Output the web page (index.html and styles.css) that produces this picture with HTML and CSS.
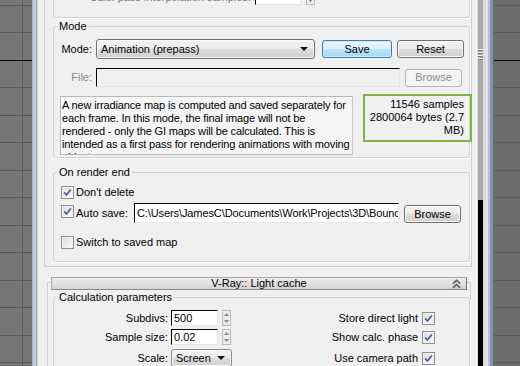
FILE: index.html
```html
<!DOCTYPE html>
<html>
  <head>
    <link rel="stylesheet" href="styles.css">
  </head>
  <body>
    <div class="screen">
      <div class="viewport viewport-left"></div>
      <div class="edge edge-left"></div>

      <div class="panel">
        <!-- Irradiance map rollout (scrolled) -->
        <div class="rollout">
          <div class="group group-cut">
            <div class="row cut-row">
              <span class="label cut-label">Calc. pass interpolation samples:</span>
              <span class="edit cut-edit">15</span>
              <svg class="spinner" width="9" height="16" viewBox="0 0 9 16">
                <rect x=".5" y=".5" width="8" height="15" fill="#ececec" stroke="#bcbcbc"/>
                <path d="M4.5 3L7 6H2z M4.5 13L7 10H2z" fill="#7f7f7f"/>
              </svg>
            </div>
          </div>

          <fieldset class="group mode-group">
            <legend>Mode</legend>
            <div class="row mode-row">
              <span class="label side-label">Mode:</span>
              <div class="combo combo-mode">
                <span>Animation (prepass)</span>
                <i class="arrow"></i>
              </div>
              <button class="btn btn-default save-btn">Save</button>
              <button class="btn reset-btn">Reset</button>
            </div>
            <div class="row file-row">
              <span class="label side-label dim">File:</span>
              <div class="edit file-edit"></div>
              <button class="btn btn-disabled browse-btn">Browse</button>
            </div>
            <div class="row info-row">
              <div class="desc">
                A new irradiance map is computed and saved separately for<br>
                each frame. In this mode, the final image will not be<br>
                rendered - only the GI maps will be calculated. This is<br>
                intended as a first pass for rendering animations with moving<br>
                objects.
              </div>
              <div class="stats">
                11546 samples<br>
                2800064 bytes (2.7<br>
                MB)
              </div>
            </div>
          </fieldset>

          <fieldset class="group end-group">
            <legend>On render end</legend>
            <div class="row check-row delete-row">
              <span class="check checked">
                <svg width="11" height="11" viewBox="0 0 11 11"><path d="M2.2 5.4l2.3 2.6 4.3-5.6" fill="none" stroke="#4b5f9c" stroke-width="1.7"/></svg>
              </span>
              <span class="check-label">Don't delete</span>
            </div>
            <div class="row check-row save-row">
              <span class="check checked">
                <svg width="11" height="11" viewBox="0 0 11 11"><path d="M2.2 5.4l2.3 2.6 4.3-5.6" fill="none" stroke="#4b5f9c" stroke-width="1.7"/></svg>
              </span>
              <span class="check-label autosave-label">Auto save:</span>
              <div class="edit path-edit"><span class="path-text">C:\Users\JamesC\Documents\Work\Projects\3D\Bounc</span></div>
              <button class="btn browse-btn">Browse</button>
            </div>
            <div class="row check-row switch-row">
              <span class="check"></span>
              <span class="check-label">Switch to saved map</span>
            </div>
          </fieldset>
        </div>

        <!-- Light cache rollout -->
        <div class="rollout2">
          <div class="rollout-head">
            <span></span>
            <span class="head-title">V-Ray:: Light cache</span>
            <svg class="chevron" width="9" height="10" viewBox="0 0 9 10">
              <path d="M1 4.6L4.5 1.2 8 4.6M1 8.9L4.5 5.5 8 8.9" fill="none" stroke="#5a5a5a" stroke-width="1.5"/>
            </svg>
          </div>
          <div class="rollout-body">
            <fieldset class="group calc-group">
              <legend>Calculation parameters</legend>
              <div class="row calc-row first-calc">
                <span class="label calc-label">Subdivs:</span>
                <span class="edit num-edit">500</span>
                <svg class="spinner" width="9" height="16" viewBox="0 0 9 16">
                  <rect x=".5" y=".5" width="8" height="15" fill="#ececec" stroke="#bcbcbc"/>
                  <path d="M4.5 3L7 6H2z M4.5 13L7 10H2z" fill="#8a8a8a"/>
                </svg>
                <span class="right-check">
                  <span class="check-label">Store direct light</span>
                  <span class="check checked">
                    <svg width="11" height="11" viewBox="0 0 11 11"><path d="M2.2 5.4l2.3 2.6 4.3-5.6" fill="none" stroke="#4b5f9c" stroke-width="1.7"/></svg>
                  </span>
                </span>
              </div>
              <div class="row calc-row">
                <span class="label calc-label">Sample size:</span>
                <span class="edit num-edit">0.02</span>
                <svg class="spinner" width="9" height="16" viewBox="0 0 9 16">
                  <rect x=".5" y=".5" width="8" height="15" fill="#ececec" stroke="#bcbcbc"/>
                  <path d="M4.5 3L7 6H2z M4.5 13L7 10H2z" fill="#8a8a8a"/>
                </svg>
                <span class="right-check">
                  <span class="check-label">Show calc. phase</span>
                  <span class="check checked">
                    <svg width="11" height="11" viewBox="0 0 11 11"><path d="M2.2 5.4l2.3 2.6 4.3-5.6" fill="none" stroke="#4b5f9c" stroke-width="1.7"/></svg>
                  </span>
                </span>
              </div>
              <div class="row calc-row scale-row">
                <span class="label calc-label">Scale:</span>
                <div class="combo combo-scale">
                  <span>Screen</span>
                  <i class="arrow"></i>
                </div>
                <span class="right-check">
                  <span class="check-label">Use camera path</span>
                  <span class="check checked">
                    <svg width="11" height="11" viewBox="0 0 11 11"><path d="M2.2 5.4l2.3 2.6 4.3-5.6" fill="none" stroke="#4b5f9c" stroke-width="1.7"/></svg>
                  </span>
                </span>
              </div>
            </fieldset>
          </div>
        </div>
      </div>

      <div class="scroll">
        <div class="scroll-track">
          <div class="grip"></div>
        </div>
        <div class="scroll-thumb"></div>
      </div>
      <div class="edge edge-right"></div>
      <div class="viewport viewport-right"></div>
    </div>
  </body>
</html>
```

FILE: styles.css
```css
* {
  box-sizing: border-box;
}

body {
  margin: 0;
  font-family: "Liberation Sans", Arial, sans-serif;
  font-size: 11px;
  line-height: 13px;
  color: #000;
  background: #f0f0f0;
}

.screen {
  display: flex;
  width: 520px;
  height: 366px;
  overflow: hidden;
}

/* Viewports on both sides */
.viewport {
  height: 366px;
  flex-shrink: 0;
  background-color: #767676;
  background-image:
    linear-gradient(#0d0d0d, #0d0d0d),
    repeating-linear-gradient(180deg, #5a5a5a 0 1px, transparent 1px 27.5px);
  background-size: 100% 1px, 100% 100%;
  background-position: 0 60px, 0 5px;
  background-repeat: no-repeat, repeat;
}

.viewport-left {
  width: 32px;
  background-image:
    linear-gradient(#0d0d0d, #0d0d0d),
    linear-gradient(#5a5a5a, #5a5a5a),
    repeating-linear-gradient(180deg, #5a5a5a 0 1px, transparent 1px 27.5px);
  background-size: 100% 1px, 1px 100%, 100% 100%;
  background-position: 0 60px, 22px 0, 0 5px;
  background-repeat: no-repeat, no-repeat, repeat;
}

.viewport-right {
  width: 26px;
  background-color: #6d6d6d;
}

.edge {
  flex-shrink: 0;
  height: 366px;
}

.edge-left {
  width: 6px;
  background: linear-gradient(90deg, #a9b2c1 0 1px, #c7ced9 1px 4px, #9fa8b6 4px 5px, #d9d9d9 5px 6px);
}

.edge-right {
  width: 8px;
  background: linear-gradient(90deg, #e4e4e4 0 2px, #b7c0ce 2px 4px, #8593a8 4px 7px, #5c6470 7px 8px);
}

/* Command panel */
.panel {
  width: 438px;
  height: 366px;
  flex-shrink: 0;
  overflow: hidden;
  background: #f0f0f0;
  border-left: 1px solid #e6e6e6;
}

.rollout {
  margin-left: 5px;
  width: 428px;
  border-left: 1px solid #cfcfcf;
  border-right: 1px solid #cfcfcf;
  border-bottom: 1px solid #cfcfcf;
  padding-bottom: 4px;
}

.row {
  display: flex;
  align-items: center;
}

.group {
  margin: 0 0 0 8px;
  padding: 0;
  width: 417px;
  border: 1px solid #d2d2d2;
  border-radius: 3px;
  box-shadow: 1px 1px 0 #fff;
  min-width: 0;
}

.group legend {
  margin-left: 3px;
  padding: 0 2px;
  line-height: 13px;
}

.group-cut {
  margin-top: -14px;
  border-top: none;
  border-radius: 0 0 3px 3px;
  padding: 3px 0 12px;
}

.cut-row {
  height: 16px;
}

.cut-label {
  width: 197px;
  text-align: right;
  color: #7a7a7a;
}

.cut-edit {
  margin-left: 4px;
  width: 46px;
  height: 16px;
  color: #7a7a7a;
  border-color: #bcbcbc;
}

.cut-row .spinner {
  margin-left: 5px;
}

.label {
  white-space: nowrap;
}

.side-label {
  width: 38px;
  text-align: right;
}

.dim {
  color: #8c8c8c;
}

/* Mode group */
.mode-group {
  margin-top: 2px;
  padding-bottom: 2px;
}

.mode-row {
  margin-top: 6px;
  height: 20px;
}

.combo {
  display: flex;
  align-items: center;
  justify-content: space-between;
  border: 1px solid #707070;
  border-radius: 3px;
  background: linear-gradient(#f3f3f3 0%, #ebebeb 50%, #dddddd 50%, #d0d0d0 100%);
  box-shadow: inset 0 0 0 1px #fafafa;
  white-space: nowrap;
  overflow: hidden;
}

.combo-mode {
  margin-left: 4px;
  width: 219px;
  height: 20px;
  padding: 0 6px 0 4px;
}

.arrow {
  width: 0;
  height: 0;
  border-left: 4px solid transparent;
  border-right: 4px solid transparent;
  border-top: 4px solid #111;
}

.btn {
  font: inherit;
  color: #000;
  padding: 0;
  height: 18px;
  border: 1px solid #707070;
  border-radius: 3px;
  background: linear-gradient(#f3f3f3 0%, #ebebeb 50%, #dddddd 50%, #cfcfcf 100%);
  box-shadow: inset 0 0 0 1px #fbfbfb;
  flex-shrink: 0;
}

.btn-default {
  border-color: #3c7fb1;
  background: linear-gradient(#eaf6fd 0%, #d9f0fc 50%, #bee6fd 50%, #a7d9f5 100%);
  box-shadow: inset 0 0 0 1px #cdeafc;
}

.btn-disabled {
  color: #8d8d8d;
  border-color: #b3b6b8;
  background: #f4f4f4;
  box-shadow: none;
}

.save-btn {
  margin-left: 7px;
  width: 70px;
}

.reset-btn {
  margin-left: 5px;
  width: 67px;
}

.edit {
  display: block;
  background: #fff;
  border: 1px solid;
  border-color: #000 #e6e6e6 #e6e6e6 #000;
  padding: 0 2px;
  white-space: nowrap;
  overflow: hidden;
  flex-shrink: 0;
}

.file-row {
  margin-top: 9px;
  height: 19px;
}

.file-edit {
  margin-left: 4px;
  width: 304px;
  height: 19px;
  background: #f0f0f0;
}

.browse-btn {
  margin-left: 5px;
  width: 57px;
}

.info-row {
  margin-top: 7px;
  align-items: flex-start;
}

.desc {
  flex-shrink: 0;
  margin: 2px 0 0 6px;
  width: 293px;
  height: 59px;
  padding: 2px 0 0 1px;
  border: 1px solid #b9b9b9;
  border-right-color: #c8c8c8;
  background: #f5f5f5;
  white-space: nowrap;
  overflow: hidden;
  letter-spacing: -0.14px;
}

.stats {
  flex-shrink: 0;
  margin-left: 10px;
  width: 109px;
  height: 48px;
  padding: 2px 6px 0 0;
  border: 2px solid #7db546;
  text-align: right;
  white-space: nowrap;
}

/* On render end group */
.end-group {
  margin-top: 8px;
  padding-bottom: 11px;
}

.check-row {
  padding-left: 7px;
}

.delete-row {
  margin-top: 6px;
  height: 15px;
}

.save-row {
  margin-top: 3px;
  height: 20px;
}

.save-row .check {
  align-self: flex-start;
  margin-top: 2px;
}

.switch-row {
  margin-top: 12px;
  height: 15px;
}

.check {
  width: 13px;
  height: 13px;
  flex-shrink: 0;
  display: flex;
  align-items: center;
  justify-content: center;
  border: 1px solid #8e8f8f;
  background: linear-gradient(135deg, #dcdcdc, #fcfcfc);
  box-shadow: inset 0 0 0 1px #f2f2f2;
}

.check-label {
  margin-left: 2px;
  white-space: nowrap;
}

.autosave-label {
  width: 58px;
}

.path-edit {
  width: 265px;
  height: 20px;
  line-height: 18px;
}

.path-text {
  letter-spacing: -0.1px;
}

.save-row .browse-btn {
  align-self: flex-start;
  margin-top: 2px;
}

/* Light cache rollout */
.rollout2 {
  margin: 10px 0 0 8px;
  width: 424px;
}

.rollout-head {
  position: relative;
  margin: 0 4px -8px 4px;
  height: 13px;
  display: grid;
  grid-template-columns: 20px 1fr 20px;
  align-items: center;
  border: 1px solid #a9a9a9;
  border-right-color: #6f6f6f;
  border-bottom-color: #8a8a8a;
  background: linear-gradient(#ececec, #d4d4d4);
  line-height: 11px;
}

.head-title {
  text-align: center;
}

.chevron {
  justify-self: end;
  margin-right: 5px;
}

.rollout-body {
  height: 120px;
  border: 1px solid #cfcfcf;
  border-bottom: none;
}

.calc-group {
  margin: 8px 0 0 5px;
  height: 100px;
}

.calc-row {
  height: 16px;
  margin-top: 3px;
  padding-right: 34px;
}

.first-calc {
  margin-top: 6px;
}

.scale-row {
  margin-top: 4px;
  height: 18px;
}

.calc-label {
  width: 114px;
  text-align: right;
}

.num-edit {
  margin-left: 3px;
  width: 47px;
  height: 16px;
  line-height: 14px;
}

.calc-row .spinner {
  margin-left: 4px;
  flex-shrink: 0;
}

.combo-scale {
  margin-left: 3px;
  width: 61px;
  height: 18px;
  padding: 0 6px 0 4px;
  border-color: #8a8a8a;
}

.right-check {
  margin-left: auto;
  display: flex;
  align-items: center;
}

.right-check .check {
  margin-left: 4px;
}

/* Panel scrollbar */
.scroll {
  width: 10px;
  height: 366px;
  flex-shrink: 0;
  display: flex;
  flex-direction: column;
  background: #dcdcdc;
  border-left: 1px solid #f6f6f6;
  padding-left: 1px;
}

.scroll-track {
  width: 5px;
  height: 200px;
  background: #a9a9a9;
  padding-top: 49px;
}

.grip {
  width: 5px;
  height: 11px;
  background: repeating-linear-gradient(180deg, #f4f4f4 0 1px, #7c7c7c 1px 2px, #a9a9a9 2px 3px);
}

.scroll-thumb {
  width: 5px;
  flex: 1;
  background: #000;
}
```
